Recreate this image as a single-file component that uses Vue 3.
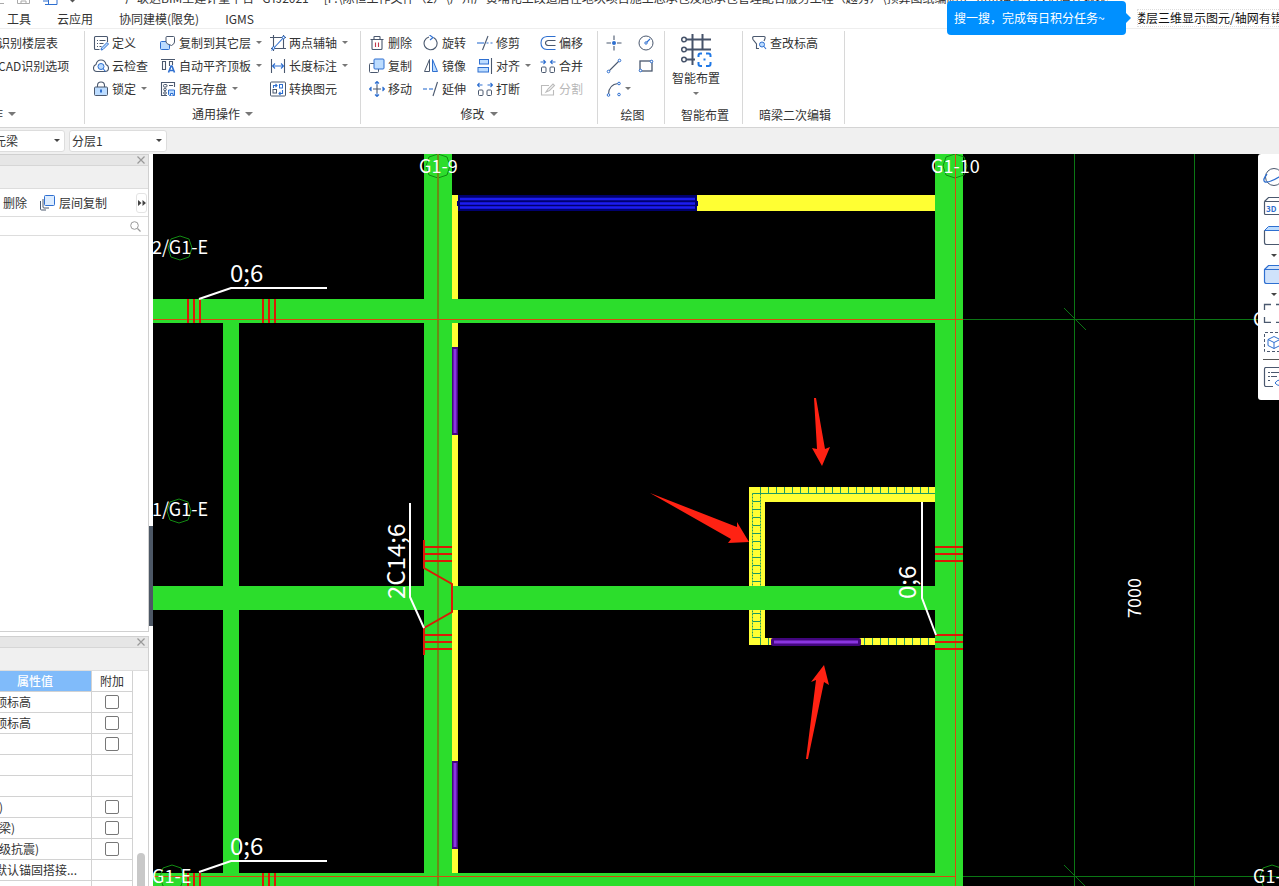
<script setup>
const slate = '#4a586e'
const blue = '#2e6fd0'
const light = '#bcdcff'

const s = (d, c = slate, extra = '') => `<path d="${d}" fill="none" stroke="${c}" stroke-width="1.1" ${extra}/>`

const icons = {
  define: s('M14.500 7V2.500q0-1-1-1h-11q-1 0-1 1v11q0 1 1 1h4') + s('M4 5.500h1M6.500 5.500h6M4 8.500h1M6.500 8.500h4M4 11.500h1M6.500 11.500h2') + `<path d="M14 7.500l1.500 1.500-5.500 5.500-2 .5.500-2z" fill="${light}" stroke="${blue}"/>`,
  copyLayer: `<rect x=".5" y="6.500" width="9" height="8" rx="1" fill="${light}" stroke="${blue}"/><path d="M7 1.500h6.500q1 0 1 1V7q0 2-3 3.500Q6 9 6 7V2.500q0-1 1-1z" fill="#fff" stroke="${slate}"/>`,
  axis: s('M3.500 0v16M0 2.500h16M13.500 0v14M1 13.500h15', slate) + s('M1.500 15.500L15 1', blue) + `<circle cx="3.500" cy="13" r="1.300" fill="#fff" stroke="${blue}"/><circle cx="13.500" cy="2.500" r="1.300" fill="#fff" stroke="${blue}"/>`,
  cloud: s('M4 13.500q-3.500 0-3.500-3.500 0-2.500 2.500-3.500 1-4.500 5-4.500t5 4.500q2.500 1 2.500 3.500 0 3.500-3.500 3.500z') + `<circle cx="8" cy="8.500" r="3" fill="${light}" stroke="${blue}"/>` + s('M10 10.500l2.500 3', blue),
  autoAlign: s('M1 1.500h14M2.500 3.500h3v8h-3zM9.500 8V3.500h3V7') + s('M8.500 14.500l2.500-6.500h1l2.500 6.500M9.500 12.500h4', blue, 'style="stroke-width:1.600"'),
  length: s('M1.500 1v14M14.500 1v14') + s('M2.500 8h11M5 5.500L2.500 8 5 10.500M11 5.500L13.500 8 11 10.500', blue),
  lock: s('M4.500 6V4.500q0-3.500 3.500-3.500t3.500 3.500V6') + `<rect x="1.500" y="6" width="13" height="8.500" rx="1" fill="${light}" stroke="${slate}"/><path d="M8 8.500v3" stroke="${blue}" stroke-width="2"/>`,
  save: s('M14.500 6V1.500h-13v13H7M9 4.500h4') + `<rect x="3.500" y="3.500" width="3.500" height="2.500" rx="1" fill="none" stroke="${slate}"/><circle cx="5" cy="8.500" r="1.300" fill="none" stroke="${slate}"/><circle cx="5" cy="12" r="1.300" fill="none" stroke="${slate}"/>` + `<path d="M8.500 9h6v5.500h-5l-1-1z" fill="${light}" stroke="${blue}"/><path d="M10.500 14.500v-2h2.500v2" fill="#fff" stroke="${blue}"/>`,
  convert: `<rect x=".5" y="1" width="15" height="14" rx="1" fill="none" stroke="${slate}"/><rect x="9.500" y="3.500" width="3" height="3.500" fill="none" stroke="${blue}"/><rect x="3" y="8.500" width="3.500" height="3.500" fill="none" stroke="${slate}"/>` + s('M3.500 7V4.500h3.500M5.500 3L7 4.500 5.500 6M12.500 9v3.500H9M10.500 11L9 12.500l1.500 1.500', blue),
  trash: s('M1.500 4.500h13M5 4.500V2q0-.5.500-.5h5q.5 0 .5.500v2.500M3 4.500v9q0 1 1 1h8q1 0 1-1v-9') + s('M6.500 7.500v4.500M9.500 7.500v4.500', '#c2384a'),
  rotate: s('M10.500 2.500A6.500 6.500 0 1 1 6 2') + s('M6.500 0L10 2.500 7 5', blue),
  trim: s('M5.500 15L11 1') + s('M0 8h7', blue) + s('M9.500 8h2M13.500 8h2', blue),
  offset: s('M15.500 1.500H7Q1 2 1 8t6 6.500h8.500', blue) + s('M15.500 5.500H8q-2.500.5-2.500 2.500T8 10.500h7.500'),
  copy: `<path d="M5 5.500H1.500q-1 0-1 1v7q0 1 1 1h7q1 0 1-1V11" fill="none" stroke="${slate}"/><rect x="5" y="1" width="10" height="10" rx="1" fill="${light}" stroke="${blue}"/>`,
  mirror: `<path d="M6.500 1.500v12H1.500z" fill="#fff" stroke="${slate}"/><path d="M9.500 1.500v12h5z" fill="${light}" stroke="${blue}"/>`,
  align: `<rect x="2.500" y="1.500" width="9" height="4.500" fill="${light}" stroke="${blue}"/><rect x="1" y="9.500" width="10.500" height="4.500" fill="${light}" stroke="${blue}"/>` + s('M14.500 0v16'),
  merge: `<rect x="1.500" y="9" width="4.500" height="5.500" rx="1" fill="none" stroke="${slate}"/><rect x="10" y="9" width="4.500" height="5.500" rx="1" fill="none" stroke="${slate}"/>` + s('M.5 4h5M3.500 2l2 2-2 2M15.500 4h-5M12.500 2l-2 2 2 2', blue),
  move: s('M8 4v8M4 8h8') + s('M6 2.500L8 .5l2 2M6 13.500l2 2 2-2M2.500 6L.5 8l2 2M13.500 6l2 2-2 2M8 .5V4M8 12v3.500M.5 8H3M13 8h2.500', blue),
  extend: s('M10 15L14.500 1') + s('M0 8h4', blue) + s('M6 8h4', blue),
  breakUp: `<rect x="1.500" y="9" width="4.500" height="5.500" rx="1" fill="none" stroke="${slate}"/><rect x="10" y="9" width="4.500" height="5.500" rx="1" fill="none" stroke="${slate}"/>` + s('M.5 4h5M2.500 2l-2 2 2 2M15.500 4h-5M13.500 2l2 2-2 2', blue),
  split: s('M9 4.500H1.500v9.500h12V9', '#bbb') + s('M6 11l2-3 5-5 1.500 1.500-5 5z', '#bbb'),
  point: s('M8 .5V5M8 11v4.500M.5 8H5M11 8h4.500') + `<circle cx="8" cy="8" r="2" fill="${blue}"/>`,
  circle: `<circle cx="8" cy="8" r="7" fill="none" stroke="${slate}"/>` + s('M8 8l4-4', blue) + `<circle cx="8" cy="8" r="1.200" fill="#fff" stroke="${blue}"/>`,
  line: s('M3 13L13 3') + `<circle cx="2.500" cy="13.500" r="1.300" fill="#fff" stroke="${blue}"/><circle cx="13.500" cy="2.500" r="1.300" fill="#fff" stroke="${blue}"/>`,
  rect: `<rect x="2" y="3" width="12" height="10" fill="none" stroke="${slate}" stroke-width="1.300"/><circle cx="2.500" cy="12.500" r="1.300" fill="#fff" stroke="${blue}"/><circle cx="13.500" cy="3.500" r="1.300" fill="#fff" stroke="${blue}"/>`,
  arc: s('M2.500 13Q3 3.500 12 2.500') + `<circle cx="2.500" cy="14" r="1.300" fill="#fff" stroke="${blue}"/><circle cx="13" cy="2.500" r="1.300" fill="#fff" stroke="${blue}"/><circle cx="13" cy="13.500" r="1.300" fill="#fff" stroke="${blue}"/>`,
  check: s('M8 13.500H5.500V9L2 4.500q-1-3 1-3h10q1.500 0 1 2L13 6') + `<circle cx="11" cy="9.500" r="2.500" fill="${light}" stroke="${blue}"/>` + s('M13 11.500l2 2.500', blue)
}

const general = [
  { t: '定义', i: 'define' }, { t: '复制到其它层', i: 'copyLayer', c: true }, { t: '两点辅轴', i: 'axis', c: true },
  { t: '云检查', i: 'cloud' }, { t: '自动平齐顶板', i: 'autoAlign', c: true }, { t: '长度标注', i: 'length', c: true },
  { t: '锁定', i: 'lock', c: true }, { t: '图元存盘', i: 'save', c: true }, { t: '转换图元', i: 'convert' }
]
const modify = [
  { t: '删除', i: 'trash' }, { t: '旋转', i: 'rotate' }, { t: '修剪', i: 'trim' }, { t: '偏移', i: 'offset' },
  { t: '复制', i: 'copy' }, { t: '镜像', i: 'mirror' }, { t: '对齐', i: 'align', c: true }, { t: '合并', i: 'merge' },
  { t: '移动', i: 'move' }, { t: '延伸', i: 'extend' }, { t: '打断', i: 'breakUp' }, { t: '分割', i: 'split', off: true }
]
const draw = [
  { i: 'point', l: '点' }, { i: 'circle', l: '圆' }, { i: 'line', l: '直线' }, { i: 'rect', l: '矩形' }, { i: 'arc', l: '弧', c: true }
]
const props = [
  { v: '顶标高', box: true, cut: true }, { v: '顶标高', box: true, cut: true }, { v: '', box: true }, { v: '' }, { v: '' },
  { v: ')', box: true }, { v: '梁)', box: true }, { v: '级抗震)', box: true }, { v: '默认锚固搭接...', cut: true }, { v: '' }
]

const range = (from, to, step) => Array.from({ length: Math.floor((to - from) / step) + 1 }, (_, n) => from + n * step)
const topTicks = range(760.5, 932, 8)
const sideTicks = range(501.5, 638, 8)
const bottomTicks = [760.5, 768.5, ...range(864.5, 932, 8)]
const oct = (x, y) => `M${x} ${y - 12}L${x + 9} ${y - 9}L${x + 12} ${y}L${x + 9} ${y + 9}L${x} ${y + 12}L${x - 9} ${y + 9}L${x - 12} ${y}L${x - 9} ${y - 9}z`
const markers = [[180, 248], [179, 511], [172, 877], [438, 166], [955, 166], [1272, 877]]
</script>

<template>
  <div class="app">
    <header class="title">
      <svg class="quick" width="80" height="6" viewBox="0 0 80 6">
        <path d="M0 3.500h4M17.500 0v3.500h12V0M21 3V1h5v2" fill="none" stroke="#aaa" />
        <path d="M48.500 0v5M43 1h6M45 4.500h12V0" fill="none" stroke="#2e6fd0" />
        <path d="M70 0h5l-2.500 2.500z" fill="#555" />
      </svg>
      <span class="name">广联达BIM土建计量平台 &nbsp; GTJ2021 &nbsp;- &nbsp;[F:\陈恒工作文件（2）\广州广黄埔化工改造居住地块项目施工总承包及总承包管理配合服务工程（越秀）\预算图纸编制\广州黄埔化工改造居住地块项目</span>
    </header>
    <div class="top">
      <nav class="tabs">
        <a href="#">工具</a><a href="#">云应用</a><a href="#">协同建模(限免)</a><a href="#">IGMS</a>
      </nav>
      <input class="find" type="text" aria-label="搜索" value="楼层三维显示图元/轴网有错误" />
      <div class="tip">搜一搜，完成每日积分任务~</div>
    </div>

    <section class="ribbon">
      <div class="group g1">
        <div class="tools">
          <button class="tool">识别楼层表</button>
          <button class="tool">CAD识别选项</button>
        </div>
        <button class="label">操作<i class="caret big"></i></button>
      </div>
      <div class="group g2">
        <div class="tools">
          <button v-for="b in general" :key="b.t" class="tool">
            <svg width="16" height="16" viewBox="0 0 16 16" v-html="icons[b.i]"></svg><span>{{ b.t }}</span><i v-if="b.c" class="caret"></i>
          </button>
        </div>
        <button class="label">通用操作<i class="caret big"></i></button>
      </div>
      <div class="group g3">
        <div class="tools">
          <button v-for="b in modify" :key="b.t" class="tool" :class="{ off: b.off }" :disabled="b.off">
            <svg width="16" height="16" viewBox="0 0 16 16" v-html="icons[b.i]"></svg><span>{{ b.t }}</span><i v-if="b.c" class="caret"></i>
          </button>
        </div>
        <button class="label">修改<i class="caret big"></i></button>
      </div>
      <div class="group g4">
        <div class="tools">
          <button v-for="b in draw" :key="b.i" class="tool" :aria-label="b.l">
            <svg width="16" height="16" viewBox="0 0 16 16" v-html="icons[b.i]"></svg><i v-if="b.c" class="caret"></i>
          </button>
        </div>
        <div class="label low">绘图</div>
      </div>
      <div class="group g5">
        <button class="smart">
          <svg width="32" height="34" viewBox="0 0 32 34" fill="none">
            <path d="M4 5.500h27M4 15.500h27M4 25.500h11M12.500 0v31M22.500 0v15" stroke="#46536a" stroke-width="2" />
            <g fill="#fff" stroke="#46536a" stroke-width="1.500"><circle cx="4" cy="5.500" r="2.300" /><circle cx="4" cy="15.500" r="2.300" /><circle cx="4" cy="25.500" r="2.300" /></g>
            <rect x="17" y="18" width="15" height="16" fill="#fff" />
            <path d="M22 19.500h-1.500q-2 0-2 2V23M26 19.500h2.500q2 0 2 2V23M18.500 28v2q0 2 2 2H22M30.500 28v2q0 2-2 2H26M23.500 25.500h2" stroke="#1f78e6" stroke-width="2" />
          </svg>
          <span>智能布置</span>
          <i class="caret"></i>
        </button>
        <div class="label low">智能布置</div>
      </div>
      <div class="group g6">
        <div class="tools">
          <button class="tool">
            <svg width="16" height="16" viewBox="0 0 16 16" v-html="icons.check"></svg><span>查改标高</span>
          </button>
        </div>
        <div class="label low">暗梁二次编辑</div>
      </div>
    </section>

    <div class="options">
      <span class="pick first"><select aria-label="构件"><option>元梁</option></select><i class="caret dark"></i></span>
      <span class="pick"><select aria-label="分层"><option>分层1</option></select><i class="caret dark"></i></span>
    </div>

    <main class="body">
      <aside class="side">
        <section class="panel list">
          <div class="strip"><button aria-label="关闭"><svg width="8" height="8" viewBox="0 0 8 8"><path d="M.5.5l7 7M7.500.5l-7 7" stroke="#999" stroke-width="1.200" /></svg></button></div>
          <div class="blank"></div>
          <div class="bar">
            <button>删除</button>
            <button class="between">
              <svg width="16" height="16" viewBox="0 0 16 16" fill="none"><path d="M1.500 6v8q0 1 1 1H7M4 4v8q0 1 1 1h5" stroke="#4a586e" /><rect x="5.500" y=".5" width="10" height="10" rx="1" fill="#dcecff" stroke="#2e6fd0" /></svg>层间复制
            </button>
            <button class="more" aria-label="更多"><svg width="8" height="6" viewBox="0 0 8 6"><path d="M0 0l3.500 3L0 6zM4.500 0L8 3 4.500 6z" fill="#444" /></svg></button>
          </div>
          <div class="search">
            <input type="text" aria-label="搜索构件" />
            <svg width="11" height="11" viewBox="0 0 11 11"><circle cx="4.500" cy="4.500" r="3.800" fill="none" stroke="#999" /><path d="M7.500 7.500L10.500 10.500" stroke="#999" stroke-width="1.200" /></svg>
          </div>
        </section>
        <section class="panel attrs">
          <div class="strip"><button aria-label="关闭"><svg width="8" height="8" viewBox="0 0 8 8"><path d="M.5.5l7 7M7.500.5l-7 7" stroke="#999" stroke-width="1.200" /></svg></button></div>
          <div class="blank"></div>
          <div class="scroll">
            <table>
              <thead><tr><th class="val">属性值</th><th class="add">附加</th></tr></thead>
              <tbody>
                <tr v-for="(p, n) in props" :key="n">
                  <td :class="{ cut: p.cut }">{{ p.v }}</td>
                  <td class="add"><input v-if="p.box" type="checkbox" :aria-label="'附加 ' + p.v" /></td>
                </tr>
              </tbody>
            </table>
            <div class="track"><div class="thumb"></div></div>
          </div>
        </section>
      </aside>
      <div class="split"><div class="grip"></div></div>

      <div class="view">
        <svg class="plan" viewBox="153 154 1126 732" preserveAspectRatio="xMinYMin slice">
          <rect x="153" y="154" width="1126" height="732" fill="#000" />
          <path d="M1074.500 154v732M1194.500 154v732M963 319.500h316M963 876.500h316M1064 308l22 22M1064 865l22 22" stroke="#0b7614" fill="none" />
          <path d="M452 195h6v678h-6zM697 195h238v16H697zM749 487h186v15H765v136h170v7H749z" fill="#ffff33" />
          <g stroke="#1c9a62" fill="none">
            <path d="M752.500 493.500H935" />
            <path d="M752.500 493.500V638M760.500 493.500V638" stroke-dasharray="2 1" />
            <path v-for="x in topTicks" :key="'t' + x" :d="`M${x} 487v7`" />
            <path v-for="y in sideTicks" :key="'s' + y" :d="`M752.500 ${y}h8`" />
            <path v-for="x in bottomTicks" :key="'b' + x" :d="`M${x} 638v7`" />
          </g>
          <rect x="458" y="195" width="239" height="16" fill="#00006e" />
          <path d="M460 199h235M460 203.500h235M460 207.500h235" stroke="#1c1cf0" stroke-width="2.500" />
          <path d="M457 201h2v5h-2zM696 201h2v5h-2z" fill="#00006e" />
          <g fill="#42067e"><rect x="452" y="347" width="6" height="88" /><rect x="452" y="761" width="6" height="88" /><rect x="771" y="638" width="90" height="8" rx="2" /></g>
          <path d="M455 349v84M455 763v84M774 642h84" stroke="#8a35e0" stroke-width="3" />

          <path d="M223 323h16v550h-16zM153 299h782v24H153zM153 586h782v24H153zM153 873h782v13H153zM424 154h28v732h-28zM935 154h28v732h-28z" fill="#2cdd2c" />
          <g fill="none" stroke="#128a12">
            <path v-for="m in markers" :key="m.join()" :d="oct(m[0], m[1])" />
          </g>
          <path d="M438 154v732" stroke="#6b8c16" stroke-width="2" />
          <g fill="#d84a10">
            <rect x="955" y="154" width="1" height="732" />
            <rect x="153" y="319" width="810" height="1" />
            <rect x="153" y="876" width="802" height="1" />
          </g>

          <g stroke="#dc1a06" stroke-width="2" fill="none">
            <path d="M188 299v24M194 299v24M200 299v24M263 299v24M269 299v24M275 299v24" />
            <path d="M188 873v13M194 873v13M200 873v13M263 873v13M269 873v13M275 873v13" />
            <path d="M424 540v28l28 16v28l-28 16v27M424 547h28M424 554h28M424 561h28M424 635h28M424 642h28M424 649h28" />
            <path d="M935 547h28M935 554h28M935 561h28M935 635h28M935 642h28M935 649h28" />
          </g>
          <g stroke="#fff" stroke-width="2" fill="none">
            <path d="M199 299l32-11h96M199 872l32-11h96M410 503v94l14 31M922 502v96l14 37" />
          </g>
          <g fill="#ff2213">
            <path d="M814 398h2l9 51 5-2-8 19-10-18 5 1z" />
            <path d="M650 493l87 34 0-5 12 20-21 1 3-4z" />
            <path d="M806 759l10-79-5 2 13-17 5 20-5-3-16 77z" />
          </g>
          <g fill="#fff" class="cad">
            <text x="419" y="173">G1-9</text>
            <text x="931" y="173">G1-10</text>
            <text x="152" y="254">2/G1-E</text>
            <text x="152" y="516">1/G1-E</text>
            <text x="152" y="883">G1-E</text>
            <text x="1253" y="883">G1-10</text>
            <text x="1253" y="326">G1-E</text>
            <text transform="translate(1141 618) rotate(-90)">7000</text>
          </g>
          <g fill="#fff" class="cad rebar">
            <text x="230" y="282">0;6</text>
            <text x="230" y="855">0;6</text>
            <text transform="translate(405 599) rotate(-90)">2C14;6</text>
            <text transform="translate(916 599) rotate(-90)">0;6</text>
          </g>
        </svg>

        <div class="dock">
          <button aria-label="动态观察"><svg width="20" height="20" viewBox="0 0 20 20" fill="none"><circle cx="11" cy="10" r="8.500" stroke="#4a586e" /><path d="M4 7q-5 6-2 8 5 1 17-7" stroke="#2e6fd0" stroke-width="1.300" /></svg></button>
          <button aria-label="三维"><svg width="20" height="20" viewBox="0 0 20 20" fill="none"><path d="M1.500 5.500h18M1.500 5.500v12q0 1 1 1H20M1.500 5.500l4-4H20" stroke="#4a586e" stroke-width="1.200" /><text x="3" y="16" font-size="8" font-weight="700" fill="#2e6fd0">3D</text></svg></button>
          <button aria-label="俯视"><svg width="20" height="20" viewBox="0 0 20 20" fill="none"><path d="M1.500 5.500l4-4H20v4z" fill="#bcdcff" stroke="#2e6fd0" /><path d="M1.500 5.500v12q0 2 2 2H20" stroke="#4a586e" stroke-width="1.200" /></svg></button>
          <i class="caret dark"></i>
          <button aria-label="实体"><svg width="20" height="20" viewBox="0 0 20 20"><path d="M1.500 5.500l4-4H21v18H3.500q-2 0-2-2zM1.500 5.500H21" fill="#cfe2fb" stroke="#2e6fd0" stroke-width="1.200" /></svg></button>
          <i class="caret dark"></i>
          <button aria-label="全屏"><svg width="20" height="20" viewBox="0 0 20 20" fill="none"><path d="M1.500 7V1.500H8M1.500 14v5.500H8M13 1.500h6M13 19.500h6" stroke="#4a586e" stroke-width="1.300" /></svg></button>
          <button aria-label="局部三维"><svg width="20" height="20" viewBox="0 0 20 20" fill="none"><path d="M20 .5H1.500v19H20" stroke="#4a586e" stroke-dasharray="3 2" /><path d="M5 7.500l6-3 6 3v6l-6 3-6-3zM5 7.500l6 3 6-3M11 10.500v6" stroke="#2e6fd0" /></svg></button>
          <hr />
          <button aria-label="显示设置"><svg width="20" height="20" viewBox="0 0 20 20" fill="none"><path d="M20 .5H3q-1.500 0-1.500 1.500v16q0 1.500 1.500 1.500h7" stroke="#4a586e" stroke-width="1.200" /><path d="M5 5.500h2M8 5.500h10M5 9.500h2M8 9.500h6M5 13.500h2" stroke="#4a586e" /><path d="M12 16q4-6 10 0-6 5-10 0z" stroke="#2e6fd0" /></svg></button>
        </div>
      </div>
    </main>
  </div>
</template>

<style>
html, body { margin: 0; overflow: hidden; }
</style>

<style scoped>
* { box-sizing: border-box; }
.app {
  height: 100vh; display: flex; flex-direction: column; overflow: hidden; background: #fff;
  color: #333; font: 12px/16px "Noto Sans CJK SC", "Noto Sans", sans-serif;
}
button, select, input { font: inherit; color: inherit; background: none; border: 0; padding: 0; margin: 0; outline: 0; }
button { white-space: nowrap; }
svg { flex: none; display: block; }
a { color: inherit; text-decoration: none; }
.caret { flex: none; width: 0; border: 3px solid transparent; border-top-color: #777; border-bottom-width: 0; }
.caret.big { border-width: 4px 4px 0; }
.caret.dark { border-top-color: #444; }

.title { flex: none; height: 8px; display: flex; align-items: flex-start; gap: 45px; overflow: hidden; }
.title .name { flex: none; width: 983px; margin-top: -10px; overflow: hidden; white-space: nowrap; }

.top { flex: none; height: 21px; display: flex; align-items: center; position: relative; border-bottom: 1px solid #eee; }
.tabs { flex: 1; display: flex; gap: 26px; padding-left: 7px; margin-top: 2px; }
.find { width: 142px; height: 18px; margin-bottom: 1px; border: 1px dotted #ddd; border-right: 0; text-indent: -4px; color: #111; }
.tip {
  position: absolute; right: 153px; top: -7px; width: 179px; height: 34px; padding-left: 7px;
  background: #0090ff; color: #fff; border-radius: 4px; line-height: 34px;
}
.tip::after { content: ""; position: absolute; left: 100%; top: 12px; border: 5px solid transparent; border-left-color: #0090ff; border-right: 0; }

.ribbon { flex: none; height: 99px; display: flex; border-bottom: 1px solid #d4d4d4; padding: 2px 0 3px; }
.group { flex: none; display: flex; flex-direction: column; justify-content: space-between; border-right: 1px solid #d8d8d8; overflow: hidden; }
.tools { display: grid; grid-auto-rows: 23px; align-items: center; }
.tool { display: flex; align-items: center; gap: 3px; }
.tool .caret { margin-left: 2px; }
.tool.off { color: #b8b8b8; }
.label { display: flex; align-items: center; justify-content: center; gap: 5px; height: 21px; line-height: 20px; }
.label.low { height: 18px; line-height: 18px; padding-left: 3px; }
.g1 { width: 85px; }
.g1 .tools { margin-left: -2px; }
.g1 .label { align-self: flex-start; margin-left: -21px; }
.g2 { width: 276px; }
.g2 .tools { padding-left: 8px; grid-template-columns: 67px 110px 1fr; }
.g3 { width: 237px; }
.g3 .tools { padding-left: 8px; grid-template-columns: 54px 54px 63px 1fr; }
.g4 { width: 67px; }
.g4 .tools { padding-left: 8px; grid-template-columns: 32px 1fr; }
.g4 .caret { margin-left: 0; }
.g5 { width: 78px; }
.smart { display: flex; flex-direction: column; align-items: center; padding: 3px 15px 0 0; gap: 2px; }
.smart .caret { margin-top: 4px; }
.g6 { width: 102px; }
.g6 .tools { padding-left: 8px; }

.options { flex: none; height: 26px; display: flex; align-items: center; gap: 4px; background: #f0f0f0; overflow: hidden; }
.pick { display: flex; align-items: center; width: 98px; height: 22px; padding: 0 4px 1px 2px; background: #fff; border: 1px solid #ddd; border-radius: 3px; }
.pick select { flex: 1; min-width: 0; appearance: none; }
.pick.first { width: 73px; margin-left: -8px; padding-left: 1px; }

.body { flex: 1; min-height: 0; display: flex; }
.side { flex: none; width: 149px; display: flex; flex-direction: column; gap: 4px; }
.panel { border: 1px solid #d0d0d0; border-left: 0; display: flex; flex-direction: column; }
.list { flex: 478 0 0; min-height: 0; }
.attrs { flex: 250 0 0; min-height: 0; overflow: hidden; border-bottom: 0; }
.strip { flex: none; height: 11px; display: flex; align-items: center; justify-content: flex-end; padding-right: 3px; background: #e6e6e6; border-bottom: 1px solid #d6d6d6; }
.blank { flex: none; height: 23px; background: #f0f0f0; border-bottom: 1px solid #ddd; }
.bar { flex: none; height: 28px; display: flex; align-items: center; padding: 0 1px 0 3px; border-bottom: 1px solid #ddd; }
.between { display: flex; align-items: center; gap: 4px; margin-left: 12px; }
.more { margin-left: auto; width: 11px; height: 20px; border: 1px solid #e4e4e4; border-radius: 3px; display: flex; align-items: center; justify-content: center; }
.search { flex: none; height: 19px; display: flex; align-items: center; padding-right: 7px; border-bottom: 1px solid #ddd; }
.search input { flex: 1; min-width: 0; }

.scroll { display: flex; flex: 1; min-height: 0; overflow: hidden; }
table { width: 133px; height: max-content; border-collapse: collapse; table-layout: fixed; }
th, td { height: 21px; padding: 0; border: 1px solid #d2d2d2; border-left: 0; border-top: 0; line-height: 18px; font-weight: 400; white-space: nowrap; overflow: hidden; }
th { height: 20px; }
.val { background: #80bbfa; color: #fff; padding-right: 21px; font-weight: 500; }
.add { width: 41px; text-align: center; }
td { text-indent: -1px; }
td.cut { text-indent: -5px; }
td input { appearance: none; display: block; width: 14px; height: 14px; margin: 0 auto; border: 1px solid #777; border-radius: 2px; background: #fff; }
.track { flex: 1; display: flex; justify-content: center; align-items: flex-end; }
.thumb { width: 8px; height: 33px; background: #c8c8c8; border-radius: 4px 4px 0 0; }

.split { flex: none; width: 4px; display: flex; flex-direction: column; }
.grip { margin-top: 372px; height: 100px; background: #4c5765; }

.view { flex: 1; min-width: 0; position: relative; background: #000; overflow: hidden; }
.plan { width: 100%; height: 100%; }
.cad { font-size: 18px; }
.rebar { font-size: 24px; }
.dock {
  position: absolute; right: 0; top: 0; width: 21px; padding: 13px 0 13px 5px; overflow: hidden;
  display: flex; flex-direction: column; gap: 9px; background: #fff; border-radius: 3px 0 0 3px;
}
.dock button { height: 20px; }
.dock .caret { margin: 0 0 -2px 8px; }
.dock hr { margin: -2px 0; width: 100%; height: 1px; border: 0; background: #555; flex: none; }
</style>
